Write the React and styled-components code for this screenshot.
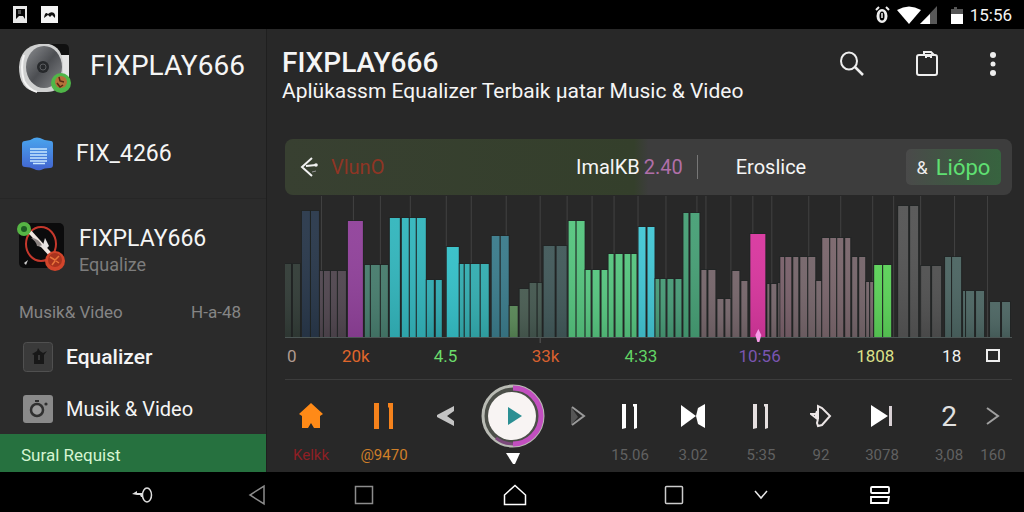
import React from 'react';
import styled, {createGlobalStyle} from 'styled-components';

//Data
//[x, top, width, color]
const bars = [
    [0, 68, 6, '#323c37'], [8, 68, 7, '#323c37'],
    [17, 15, 8, '#29384b'], [26, 15, 8, '#29384b'],
    [35, 75, 3, '#50464f'], [39, 75, 6, '#50464f'], [46, 75, 6, '#50464f'], [53, 75, 8, '#50464f'],
    [63, 25, 15, '#91429b'],
    [80, 69, 5, '#477c6d'], [86, 69, 9, '#477c6d'], [96, 69, 7, '#477c6d'],
    [105, 22, 10, '#33b6bd'], [117, 22, 7, '#33b6bd'], [125, 22, 6, '#33b6bd'], [132, 22, 9, '#33b6bd'],
    [142, 84, 7, '#2fa9b0'], [151, 84, 6, '#2fa9b0'],
    [162, 51, 12, '#35c0c8'],
    [175, 68, 4, '#33adb0'], [180, 68, 5, '#33adb0'], [186, 68, 9, '#33adb0'], [196, 68, 8, '#33adb0'],
    [207, 40, 8, '#3b7c8c'], [216, 40, 8, '#3b7c8c'],
    [225, 110, 8, '#578555'],
    [235, 93, 9, '#485b51'], [245, 87, 7, '#44574f'], [253, 87, 4, '#44574f'],
    [259, 50, 11, '#42595a'], [272, 50, 10, '#42595a'],
    [284, 25, 7, '#56c57f'], [292, 25, 8, '#56c57f'],
    [301, 74, 5, '#56c57f'], [308, 74, 7, '#56c57f'], [317, 74, 6, '#56c57f'],
    [324, 58, 5, '#56c57f'], [331, 58, 7, '#56c57f'], [340, 58, 6, '#56c57f'], [347, 58, 5, '#56c57f'],
    [354, 31, 7, '#43c7d5'], [363, 31, 7, '#43c7d5'],
    [371, 83, 4, '#479a76'], [376, 83, 5, '#479a76'], [383, 83, 6, '#479a76'], [391, 83, 6, '#479a76'],
    [399, 17, 5, '#47a076'], [406, 17, 9, '#47a076'],
    [417, 74, 5, '#75656a'], [424, 74, 7, '#75656a'],
    [433, 103, 6, '#75656a'], [441, 103, 5, '#75656a'],
    [448, 75, 7, '#75656a'], [457, 85, 6, '#75656a'],
    [466, 38, 15, '#d9379f'],
    [483, 88, 2, '#75656a'], [487, 88, 5, '#75656a'], [494, 87, 2, '#75656a'],
    [496, 61, 4, '#79606a'], [501, 61, 6, '#79606a'], [509, 61, 5, '#75656a'], [516, 61, 7, '#75656a'], [524, 61, 7, '#75656a'],
    [532, 85, 5, '#75656a'],
    [538, 42, 7, '#7a666c'], [546, 42, 6, '#7a666c'], [553, 42, 6, '#7a666c'], [561, 42, 5, '#7a666c'],
    [568, 61, 5, '#75656a'], [575, 61, 6, '#75656a'], [582, 86, 3, '#75656a'], [586, 86, 3, '#75656a'],
    [590, 69, 8, '#5bd158'], [599, 69, 8, '#5bd158'],
    [614, 10, 10, '#555555'], [626, 10, 8, '#555555'],
    [637, 70, 9, '#505050'], [648, 70, 9, '#505050'],
    [661, 61, 6, '#4c6562'], [668, 61, 9, '#4c6562'],
    [679, 95, 2, '#4c6562'], [682, 95, 8, '#4c6562'], [692, 95, 8, '#4c6562'],
    [706, 106, 10, '#4c6562'], [718, 106, 8, '#4c6562'],
];

const gridLines = [36, 68, 95, 125, 161, 186, 221, 255, 282, 307, 329, 353, 381, 412, 421, 446, 468, 487, 524, 556, 588, 609, 636, 670, 703];

const scale = [
    {text: '0', color: '#b09a90'},
    {text: '20k', color: '#e0662b'},
    {text: '4.5', color: '#6bdc6b'},
    {text: '33k', color: '#d8602f'},
    {text: '4:33', color: '#62d465'},
    {text: '10:56', color: '#7a55b0'},
    {text: '1808', color: '#dbe08a'},
    {text: '18', color: '#f2f2f2'},
];

//Icons
const SpeakerIcon = () => (
    <svg width="52" height="52" viewBox="0 0 52 52">
        <defs>
            <linearGradient id="disc" x1="0" y1="0" x2="1" y2="1">
                <stop offset="0" stopColor="#8b8d90"/>
                <stop offset=".5" stopColor="#4c4e52"/>
                <stop offset="1" stopColor="#85878a"/>
            </linearGradient>
        </defs>
        <path d="M30 1h15q5 0 5 5v34H30z" fill="#101010"/>
        <path d="M42 12h8v22h-8z" fill="#e4e4e4"/>
        <path d="M20 1h10q13 3 14 20v16q-4 12-16 12H18Q0 47 0 24 1 4 20 1z" fill="#cfd0d0"/>
        <path d="M5 12Q1 24 5 38q5 9 13 11" stroke="#f4f4f4" strokeWidth="2" fill="none"/>
        <ellipse cx="25" cy="24" rx="18" ry="21" fill="url(#disc)"/>
        <circle cx="24" cy="24" r="6" fill="#26282b"/>
        <circle cx="24" cy="24" r="3" fill="none" stroke="#5b5d60"/>
        <circle cx="42" cy="40" r="10" fill="#4fb648"/>
        <circle cx="42" cy="39" r="6" fill="#b5713a"/>
        <path d="M40 34l1 4 4 1M38 40l3 4 3-2" stroke="#5a2812" strokeWidth="1.500" fill="none"/>
    </svg>
);

const DocIcon = () => (
    <svg width="32" height="34" viewBox="0 0 32 34">
        <defs>
            <linearGradient id="doc" x1="0" y1="0" x2="0" y2="1">
                <stop offset="0" stopColor="#4aa5ee"/>
                <stop offset="1" stopColor="#4263cf"/>
            </linearGradient>
        </defs>
        <path d="M3 4q5 0 9-3 3-1 6 0 5 3 11 3 2 0 2 3v21q0 3-3 3-6 0-9 2-4 1-7-1-4-2-9-2-3 0-3-3V7q0-3 3-3z" fill="url(#doc)"/>
        <path d="M8 12h17M8 15h17M8 18h17M8 21h17M8 24h17M11 26.500h12" stroke="#c9e8ff" strokeWidth="1.600"/>
    </svg>
);

const TuneIcon = () => (
    <svg width="50" height="52" viewBox="0 0 50 52">
        <rect x="2" y="2" width="45" height="45" rx="5" fill="#0b0b0c"/>
        <ellipse cx="24" cy="23" rx="15" ry="17" fill="none" stroke="#c5382c" strokeWidth="2"/>
        <path d="M13 11l20 22" stroke="#f0e6e0" strokeWidth="4"/>
        <path d="M14 17q8 0 12 9l-6-1q-1-5-6-8z" fill="#8d8583"/>
        <path d="M28 17l4 8-3 3-7-3 4-1z" fill="#e5e2e0"/>
        <path d="M7 42l4-3-2 5z" fill="#ccc"/>
        <circle cx="7" cy="8" r="7" fill="#56b544"/>
        <circle cx="7" cy="8" r="3" fill="#1d5c24"/>
        <circle cx="38" cy="40" r="10" fill="#d2452b"/>
        <circle cx="38" cy="39" r="7" fill="#a8331e"/>
        <path d="M33 36l5 3 4-4M38 40l-3 4M39 40l3 2" stroke="#e8743a" strokeWidth="1.500" fill="none"/>
    </svg>
);

const HouseTile = () => (
    <svg width="30" height="30" viewBox="0 0 30 30">
        <rect x=".5" y=".5" width="29" height="29" rx="3" fill="#3a3a3a" stroke="#505050"/>
        <path d="M9 12l5-3 1-3 2 3 3 2 4-2-3 4v9H11v-9z" fill="#181818"/>
        <path d="M15 13h2v5h-2z" fill="#3a3a3a"/>
    </svg>
);

const CameraTile = () => (
    <svg width="30" height="30" viewBox="0 0 30 30">
        <rect y="1" width="30" height="28" rx="3" fill="#8a8a8a"/>
        <circle cx="14" cy="16" r="6" fill="#9a9a9a" stroke="#303030" strokeWidth="2.500"/>
        <path d="M12 6h4v2h-4z" fill="#303030"/>
        <circle cx="23" cy="10" r="1.600" fill="#303030"/>
    </svg>
);

const StatusIcons = () => (
    <svg width="92" height="20" viewBox="0 0 92 20">
        <path d="M2 5l3-3M12 2l3 3" stroke="#eee" strokeWidth="2"/>
        <ellipse cx="8" cy="11" rx="5.500" ry="7" fill="#eee"/>
        <ellipse cx="8" cy="11" rx="2.500" ry="4.500" fill="#000"/>
        <path d="M8 8v5" stroke="#eee" strokeWidth="1.500"/>
        <path d="M23 5q12-7 24 0L35 19z" fill="#fff"/>
        <path d="M63 1v18H46z" fill="#585858"/>
        <path d="M56 9v10H46z" fill="#fff"/>
        <path d="M80 2h3v2h3v6h-9V4h3z" fill="#555"/>
        <path d="M77 9h12v10H77z" fill="#fff"/>
        <path d="M77 4h12v5H77z" fill="#555"/>
    </svg>
);

const PauseIcon = ({color = '#fff', tall}) => (
    <svg width="24" height="28" viewBox="0 0 24 28">
        {tall
            ? <path d="M2 1h5v26H2zM16 1h5v26h-4V6l-1-1z" fill={color}/>
            : <path d="M4 2h4v24l-4 1zM15 2h4v24l-3 1V5l-1-1z" fill={color}/>}
    </svg>
);

const Chart = () => (
    <StyledChart viewBox="0 0 728 147" preserveAspectRatio="none" role="img" aria-label="Equalizer levels">
        <defs>
            <linearGradient id="fade" x1="0" y1="0" x2="0" y2="1">
                <stop offset="0" stopColor="#fff" stopOpacity=".04"/>
                <stop offset="1" stopColor="#000" stopOpacity=".1"/>
            </linearGradient>
        </defs>
        {gridLines.map(x => <rect key={x} x={x} y="0" width="1" height="141" fill="#424242"/>)}
        <rect x="255" y="141" width="1" height="6" fill="#5a5a5a"/>
        {bars.map(([x, top, width, color]) => (
            <g key={x}>
                <rect x={x - 1} y={top - 1} width={width + 2} height={142 - top} fill="#1f2424" fillOpacity=".7"/>
                <rect x={x} y={top} width={width} height={141 - top} fill={color}/>
                <rect x={x} y={top} width={width} height={141 - top} fill="url(#fade)"/>
            </g>
        ))}
        <rect x="0" y="141" width="728" height="1" fill="#4c5554"/>
        <path d="M474 133l3 6-2 7h-2l-2-7z" fill="#f79be8"/>
    </StyledChart>
);

const controls = [
    {name: 'Home', label: 'Kelkk', color: '#8e1f24', icon: (
        <svg width="26" height="28" viewBox="0 0 26 28"><path d="M13 1l12 11-3 2v12h-6l-3-5-3 5H4V14l-3-2z" fill="#ff8a17"/></svg>
    )},
    {name: 'Pause track', label: '@9470', color: '#cf7f28', icon: <PauseIcon tall color="#f5821c"/>},
    {name: 'Previous', icon: (
        <svg width="18" height="20" viewBox="0 0 18 20"><path d="M17 0v5l-7 5 7 5v5L0 11V9z" fill="#c4c4c4"/></svg>
    )},
    {name: 'Play', icon: (
        <svg width="64" height="64" viewBox="0 0 64 64">
            <circle cx="32" cy="32" r="30" fill="#4c4f49" stroke="#b9bbb4" strokeWidth="3"/>
            <path d="M32 4a28 28 0 0 1 0 56" fill="none" stroke="#c24fc0" strokeWidth="5"/>
            <path d="M32 60a28 28 0 0 1-17-6" fill="none" stroke="#7c4a7c" strokeWidth="3"/>
            <circle cx="31" cy="32" r="24" fill="#f8f4f3"/>
            <path d="M27 23l14 9-14 9z" fill="#2b8f93"/>
        </svg>
    ), marker: true},
    {name: 'Next', icon: (
        <svg width="16" height="20" viewBox="0 0 16 20"><path d="M1 1v18l7-8z" fill="#555"/><path d="M2 1l12 9-12 9" fill="none" stroke="#9a9a9a" strokeWidth="2"/></svg>
    )},
    {name: 'Hold', label: '15.06', icon: <PauseIcon/>},
    {name: 'Skip', label: '3.02', icon: (
        <svg width="24" height="24" viewBox="0 0 24 24"><path d="M0 1l15 11L0 23z" fill="#fff"/><path d="M24 0v24l-7-4-2-8 2-8z" fill="#fff"/></svg>
    )},
    {name: 'Break', label: '5:35', icon: <PauseIcon color="#e6e0e0"/>},
    {name: 'Shuffle', label: '92', icon: (
        <svg width="22" height="24" viewBox="0 0 22 24"><path d="M8 15V2l4 2 8 8-8 9-4 1-1-3 1-4M7 7l-1 3H1l5 4V9" fill="none" stroke="#ece6e6" strokeWidth="2"/></svg>
    )},
    {name: 'Last', label: '3078', icon: (
        <svg width="22" height="24" viewBox="0 0 22 24"><path d="M0 1l17 11L0 23z" fill="#fff"/><path d="M18 2h3v20h-3z" fill="#d8d0d4"/></svg>
    )},
    {name: 'Count', label: '3,08', glyph: '2'},
    {name: 'More', label: '160', icon: (
        <svg width="14" height="20" viewBox="0 0 14 20"><path d="M1 2l11 8-11 8" fill="none" stroke="#a0a0a0" strokeWidth="2"/></svg>
    )},
];

const App = () => {
    return(
        <>
        <GlobalStyle/>
        <StyledPage>
            <StyledStatus>
                <svg width="46" height="18" viewBox="0 0 46 18">
                    <path d="M0 0h14v17H0z" fill="#e8e8e8"/>
                    <path d="M3 3h9v10l-2-3H6l-3 3z" fill="#080808"/>
                    <path d="M5 4h3v4H5z" fill="#555"/>
                    <path d="M28 0h17v17H28z" fill="#f4f4f4"/>
                    <path d="M31 12q1-7 4-4 3-3 6-1 2 2 1 5l-3-3-2 2-2-2z" fill="#111"/>
                </svg>
                <StyledClock><StatusIcons/><time>15:56</time></StyledClock>
            </StyledStatus>
            <StyledBody>
                <StyledSidebar>
                    <StyledBrand>
                        <SpeakerIcon/>
                        <h2>FIXPLAY666</h2>
                    </StyledBrand>
                    <StyledAccount>
                        <DocIcon/>
                        <span>FIX_4266</span>
                    </StyledAccount>
                    <StyledApp>
                        <TuneIcon/>
                        <div>
                            <h3>FIXPLAY666</h3>
                            <p>Equalize</p>
                        </div>
                    </StyledApp>
                    <StyledSection><span>Musik&amp; Video</span><span>H-a-48</span></StyledSection>
                    <StyledLink href="#equalizer" $strong><HouseTile/>Equalizer</StyledLink>
                    <StyledLink href="#video"><CameraTile/>Musik &amp; Video</StyledLink>
                    <StyledActive href="#request">Sural Requist</StyledActive>
                </StyledSidebar>
                <StyledMain>
                    <StyledHeader>
                        <div>
                            <h1>FIXPLAY666</h1>
                            <p>Aplükassm Equalizer Terbaik µatar Music &amp; Video</p>
                        </div>
                        <StyledActions>
                            <button aria-label="Search">
                                <svg width="26" height="26" viewBox="0 0 26 26"><ellipse cx="10" cy="10" rx="8" ry="8.500" fill="none" stroke="#eee" strokeWidth="2"/><path d="M16 16l8 8" stroke="#eee" strokeWidth="2.500"/></svg>
                            </button>
                            <button aria-label="Clipboard">
                                <svg width="24" height="26" viewBox="0 0 24 26"><rect x="2" y="4" width="20" height="20" rx="2" fill="none" stroke="#eee" strokeWidth="2"/><path d="M9 4V1h7l3 3M11 7V5h5v2" fill="none" stroke="#eee" strokeWidth="2"/></svg>
                            </button>
                            <button aria-label="Menu">
                                <svg width="8" height="26" viewBox="0 0 8 26" fill="#eee"><circle cx="4" cy="4" r="3"/><circle cx="4" cy="13" r="2.500"/><circle cx="4" cy="22" r="3"/></svg>
                            </button>
                        </StyledActions>
                    </StyledHeader>
                    <StyledToolbar>
                        <StyledBack>
                            <svg width="18" height="22" viewBox="0 0 18 22"><path d="M12 2L2 11l10 9M6 10l10-1" fill="none" stroke="#f2f2f2" strokeWidth="2"/><circle cx="16" cy="9" r="1.800" fill="#f2f2f2"/><path d="M12 16l4-1" stroke="#999"/></svg>
                            VlunO
                        </StyledBack>
                        <StyledInfo>
                            <span>ImalKB</span>
                            <StyledAmount>2.40</StyledAmount>
                            <StyledPreset>Eroslice</StyledPreset>
                        </StyledInfo>
                        <StyledChip><span>&amp;</span>Liópo</StyledChip>
                    </StyledToolbar>
                    <Chart/>
                    <StyledScale>
                        {scale.map(({text, color}) => <StyledTick key={text} $color={color}>{text}</StyledTick>)}
                        <svg width="15" height="14" viewBox="0 0 15 14"><rect x="1" y="1" width="12" height="11" fill="none" stroke="#eee" strokeWidth="2"/></svg>
                    </StyledScale>
                    <StyledControls>
                        {controls.map(({name, label, color, icon, glyph, marker}) => (
                            <StyledControl key={name} aria-label={name}>
                                <StyledFace>{icon || glyph}</StyledFace>
                                <StyledLabel $color={color}>
                                    {marker && <svg width="14" height="24" viewBox="0 0 14 24"><path d="M0 10h14L9 21H7z" fill="#fff"/></svg>}
                                    {label}
                                </StyledLabel>
                            </StyledControl>
                        ))}
                    </StyledControls>
                </StyledMain>
            </StyledBody>
            <StyledNav>
                <button aria-label="Key">
                    <svg width="22" height="18" viewBox="0 0 22 18" fill="none" stroke="#ddd"><ellipse cx="16" cy="9" rx="4.500" ry="7" strokeWidth="1.500"/><path d="M1 8l5-3v2h6v4h-2l-1-2H6z" fill="#ddd" stroke="none"/></svg>
                </button>
                <button aria-label="Back">
                    <svg width="18" height="22" viewBox="0 0 18 22"><path d="M16 2v18L2 11z" fill="none" stroke="#8c8c8c" strokeWidth="1.500"/></svg>
                </button>
                <button aria-label="Stop">
                    <svg width="20" height="20" viewBox="0 0 20 20"><rect x="1.500" y="1.500" width="17" height="17" fill="none" stroke="#8c8c8c" strokeWidth="1.500"/></svg>
                </button>
                <button aria-label="Home screen">
                    <svg width="24" height="22" viewBox="0 0 24 22"><path d="M1.500 11L12 1.500 22.500 11v9.500h-21z" fill="none" stroke="#fff" strokeWidth="1.500"/></svg>
                </button>
                <button aria-label="Recent">
                    <svg width="20" height="20" viewBox="0 0 20 20"><rect x="1.500" y="1.500" width="17" height="17" rx="1" fill="none" stroke="#ccc" strokeWidth="1.500"/></svg>
                </button>
                <button aria-label="Hide">
                    <svg width="14" height="10" viewBox="0 0 14 10"><path d="M1 1l6 7 6-7" fill="none" stroke="#e8e8e8" strokeWidth="1.500"/></svg>
                </button>
                <button aria-label="Split screen">
                    <svg width="22" height="20" viewBox="0 0 22 20" fill="none" stroke="#fff" strokeWidth="1.800"><rect x="2" y="2" width="18" height="6" rx="1"/><path d="M2 12h18l-1 6H2z"/></svg>
                </button>
            </StyledNav>
        </StyledPage>
        </>
    );
};

//Style
const GlobalStyle = createGlobalStyle`
    * {
        margin: 0;
        padding: 0;
        box-sizing: border-box;
    }
    body {
        background: #000;
        color: #f5f5f5;
        font-family: Roboto, 'Noto Sans', sans-serif;
    }
    button {
        background: none;
        border: none;
        color: inherit;
        font: inherit;
        cursor: pointer;
    }
    a {
        color: inherit;
        text-decoration: none;
    }
    svg {
        display: block;
        flex-shrink: 0;
    }
`;

const StyledPage = styled.div`
    min-height: 100vh;
    display: flex;
    flex-direction: column;
`;

const StyledStatus = styled.header`
    display: flex;
    align-items: center;
    justify-content: space-between;
    height: 29px;
    padding: 0 12px 0 13px;
`;

const StyledClock = styled.div`
    display: flex;
    align-items: center;
    gap: 4px;
    font-size: 17px;
`;

const StyledBody = styled.div`
    flex: 1;
    display: grid;
    grid-template-columns: 267px 1fr;
    background: #282828;
`;

const StyledSidebar = styled.aside`
    display: flex;
    flex-direction: column;
    background: #2b2b2b;
    border-right: 1px solid #1f1f1f;
`;

const StyledBrand = styled.div`
    display: flex;
    align-items: center;
    gap: 19px;
    height: 80px;
    padding-left: 19px;
    h2 {
        padding-bottom: 8px;
        font-size: 28px;
        font-weight: 400;
    }
`;

const StyledAccount = styled.div`
    display: flex;
    align-items: center;
    gap: 22px;
    height: 90px;
    padding-left: 22px;
    border-bottom: 1px solid #262626;
    font-size: 23px;
`;

const StyledApp = styled.div`
    display: flex;
    align-items: center;
    gap: 12px;
    height: 95px;
    padding-left: 17px;
    h3 {
        padding-top: 8px;
        font-size: 23px;
        font-weight: 400;
        line-height: 28px;
    }
    p {
        color: #7d7d7d;
        font-size: 18px;
        line-height: 24px;
    }
`;

const StyledSection = styled.div`
    display: flex;
    align-items: center;
    justify-content: space-between;
    height: 36px;
    padding: 0 25px 0 19px;
    color: #858585;
    font-size: 17px;
`;

const StyledLink = styled.a`
    display: flex;
    align-items: center;
    gap: 13px;
    height: 52px;
    padding: 2px 0 0 23px;
    font-size: ${({$strong}) => $strong ? '21px' : '20px'};
    font-weight: ${({$strong}) => $strong ? 500 : 400};
`;

const StyledActive = styled.a`
    display: flex;
    flex: 1;
    align-items: center;
    padding: 10px 21px 6px;
    background: #26713f;
    color: #d5f5d2;
    font-size: 17px;
    line-height: 22px;
`;

const StyledMain = styled.main`
    display: flex;
    flex-direction: column;
    padding: 0 12px 0 18px;
`;

const StyledHeader = styled.div`
    display: flex;
    justify-content: space-between;
    height: 110px;
    padding-top: 18px;
    margin-left: -3px;
    h1 {
        font-size: 28px;
        font-weight: 500;
        line-height: 32px;
    }
    p {
        font-size: 21px;
        line-height: 24px;
    }
`;

const StyledActions = styled.div`
    display: flex;
    align-items: flex-start;
    gap: 50px;
    padding: 4px 15px 0 0;
`;

const StyledToolbar = styled.div`
    display: grid;
    grid-template-columns: 291fr 330fr 106fr;
    align-items: center;
    height: 56px;
    border-radius: 8px;
    background: linear-gradient(90deg, #384031 0%, #343f2b 48%, #3d3d3d 50%, #3d3d3d 100%);
    font-size: 20px;
`;

const StyledBack = styled.button`
    display: flex;
    align-items: center;
    gap: 13px;
    padding-left: 15px;
    color: #8f3524;
`;

const StyledInfo = styled.div`
    display: flex;
    align-items: center;
    gap: 4px;
`;

const StyledAmount = styled.span`
    padding-right: 14px;
    border-right: 1px solid #777;
    color: #b06fa8;
`;

const StyledPreset = styled.span`
    padding-left: 34px;
`;

const StyledChip = styled.button`
    display: flex;
    align-items: center;
    justify-content: center;
    gap: 8px;
    height: 36px;
    margin-right: 11px;
    border-radius: 5px;
    background: linear-gradient(90deg, #4a4a4a, #3d5a41 60%, #37633f);
    color: #5fe072;
    font-size: 22px;
    span {
        color: #eee;
        font-size: 18px;
    }
`;

const StyledChart = styled.svg`
    width: 100%;
    height: 147px;
    margin-top: 1px;
`;

const StyledScale = styled.div`
    display: grid;
    grid-template-columns: 55fr 92fr 98fr 93fr 114fr 118fr 86fr 44fr 26fr;
    align-items: center;
    height: 37px;
    padding: 0 0 10px 2px;
    border-bottom: 1px solid #3c3c3c;
`;

const StyledTick = styled.span`
    color: ${({$color}) => $color};
    font-size: 17px;
`;

const StyledControls = styled.div`
    display: grid;
    grid-template-columns: 64fr 82fr 42fr 92fr 38fr 66fr 60fr 76fr 44fr 78fr 56fr 32fr;
    flex: 1;
    margin: 0 3px 0 -6px;
`;

const StyledControl = styled.button`
    display: flex;
    flex-direction: column;
    align-items: center;
    padding-top: 4px;
    min-width: 0;
`;

const StyledFace = styled.span`
    display: flex;
    align-items: center;
    height: 64px;
    color: #e0e0e0;
    font-size: 28px;
`;

const StyledLabel = styled.span`
    display: flex;
    align-items: center;
    height: 14px;
    color: ${({$color}) => $color || '#616161'};
    font-size: 15px;
`;

const StyledNav = styled.nav`
    display: grid;
    grid-template-columns: 116fr 114fr 100fr 202fr 116fr 58fr 180fr;
    height: 40px;
    padding: 6px 54px 0 84px;
    button {
        display: flex;
        align-items: center;
        justify-content: center;
    }
`;

export default App;
